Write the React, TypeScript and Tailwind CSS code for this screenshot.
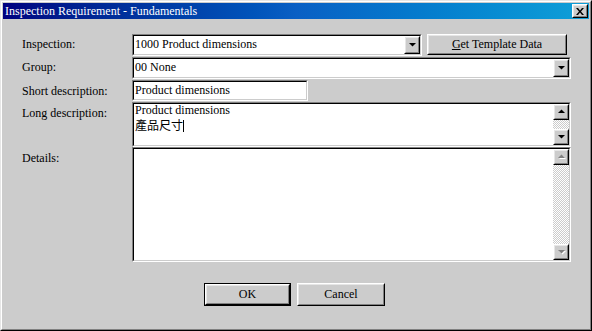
import React from 'react';

const serif = "font-['Liberation_Serif','Noto_Sans_CJK_TC',serif]";

const Arrow = ({ down = true, disabled = false }: { down?: boolean; disabled?: boolean }) => (
  <svg width="9" height="6" viewBox="0 0 9 6" className="block">
    {disabled && (
      <polygon points={down ? '2,2 9,2 5.5,5.5' : '2,5 9,5 5.5,1.5'} fill="#ffffff" />
    )}
    <polygon points={down ? '1,1 8,1 4.5,4.5' : '1,4 8,4 4.5,0.5'} fill={disabled ? '#808080' : '#000000'} />
  </svg>
);

const Raised = ({ className = '', children }: { className?: string; children?: React.ReactNode }) => (
  <div className={`border border-t-white border-l-white border-r-black border-b-black bg-[#cccccc] ${className}`}>
    <div className="h-full w-full border border-t-[#e6e6e6] border-l-[#e6e6e6] border-r-[#808080] border-b-[#808080] flex items-center justify-center">
      {children}
    </div>
  </div>
);

const Sunken = ({ className = '', children }: { className?: string; children?: React.ReactNode }) => (
  <div className={`border border-t-[#808080] border-l-[#808080] border-r-white border-b-white ${className}`}>
    <div className="h-full w-full border border-t-black border-l-black border-r-[#cccccc] border-b-[#cccccc] bg-white flex">
      {children}
    </div>
  </div>
);

const Combo = ({ value, className = '' }: { value: string; className?: string }) => (
  <Sunken className={className}>
    <div className={`flex-1 pl-[1px] leading-[17px] text-black ${serif}`}>{value}</div>
    <Raised className="w-[16px] h-[18px]">
      <Arrow />
    </Raised>
  </Sunken>
);

const Scrollbar = ({ disabled = false }: { disabled?: boolean }) => (
  <div className="w-[16px] h-full flex flex-col bg-[repeating-conic-gradient(#cccccc_0_25%,#ffffff_0_50%)] bg-[length:2px_2px]">
    <Raised className="w-[16px] h-[16px]">
      <Arrow down={false} disabled={disabled} />
    </Raised>
    <div className="flex-1" />
    <Raised className="w-[16px] h-[16px]">
      <Arrow disabled={disabled} />
    </Raised>
  </div>
);

const Label = ({ children }: { children: React.ReactNode }) => (
  <div className={`w-[110px] shrink-0 pt-[4px] leading-[14px] text-black ${serif}`}>{children}</div>
);

export default function App() {
  return (
    <div className={`w-[592px] h-[331px] bg-[#cccccc] border border-t-[#e6e6e6] border-l-[#e6e6e6] border-r-black border-b-black text-[12px] ${serif}`}>
      <div className="h-full w-full border border-t-white border-l-white border-r-[#808080] border-b-[#808080] p-[1px] flex flex-col">
        {/* Title bar */}
        <div className="h-[16px] flex items-center bg-gradient-to-r from-[#000080] via-[#0a5fc4] to-[#10a0d8] pl-[2px] pr-[1px]">
          <span className={`flex-1 text-white leading-[16px] ${serif}`}>Inspection Requirement - Fundamentals</span>
          <Raised className="w-[16px] h-[14px]">
            <svg width="8" height="7" viewBox="0 0 8 7">
              <path d="M0 0h2l2 2.5L6 0h2L5 3.5 8 7H6L4 4.5 2 7H0l3-3.5z" fill="#000" />
            </svg>
          </Raised>
        </div>

        {/* Form */}
        <div className="flex flex-col pl-[19px] pt-[14px]">
          <div className="flex h-[22px] items-start">
            <Label>Inspection:</Label>
            <Combo value="1000 Product dimensions" className="w-[290px] h-[22px] mt-[1px]" />
            <Raised className="ml-[5px] mt-[1px] w-[140px] h-[21px]">
              <span className={`text-black leading-[15px] ${serif}`}>
                <span className="underline">G</span>et Template Data
              </span>
            </Raised>
          </div>

          <div className="flex h-[22px] mt-[1px] items-start">
            <Label>Group:</Label>
            <Combo value="00 None" className="w-[439px] h-[22px] mt-[1px]" />
          </div>

          <div className="flex h-[21px] mt-[2px] items-start">
            <Label>Short description:</Label>
            <Sunken className="w-[176px] h-[21px]">
              <div className={`pl-[1px] leading-[16px] text-black ${serif}`}>Product dimensions</div>
            </Sunken>
          </div>

          <div className="flex h-[45px] mt-[1px] items-start">
            <Label>Long description:</Label>
            <Sunken className="w-[439px] h-[45px]">
              <div className={`flex-1 pl-[1px] text-black ${serif}`}>
                <div className="leading-[12px]">Product dimensions</div>
                <div className="mt-[2px] text-[12px] leading-[13px] font-['Noto_Sans_CJK_TC','Liberation_Serif',sans-serif]">
                  產品尺寸<span className="inline-block w-[1px] h-[12px] bg-black align-[-2px]" />
                </div>
              </div>
              <Scrollbar />
            </Sunken>
          </div>

          <div className="flex h-[115px] items-start">
            <Label>Details:</Label>
            <Sunken className="w-[439px] h-[115px]">
              <div className="flex-1" />
              <Scrollbar disabled />
            </Sunken>
          </div>

          <div className="flex justify-center gap-[6px] mt-[21px] pr-[22px]">
            <div className="border border-black">
              <Raised className="w-[85px] h-[21px]">
                <span className={`text-black leading-[15px] ${serif}`}>OK</span>
              </Raised>
            </div>
            <Raised className="w-[88px] h-[23px]">
              <span className={`text-black leading-[15px] ${serif}`}>Cancel</span>
            </Raised>
          </div>
        </div>
      </div>
    </div>
  );
}
